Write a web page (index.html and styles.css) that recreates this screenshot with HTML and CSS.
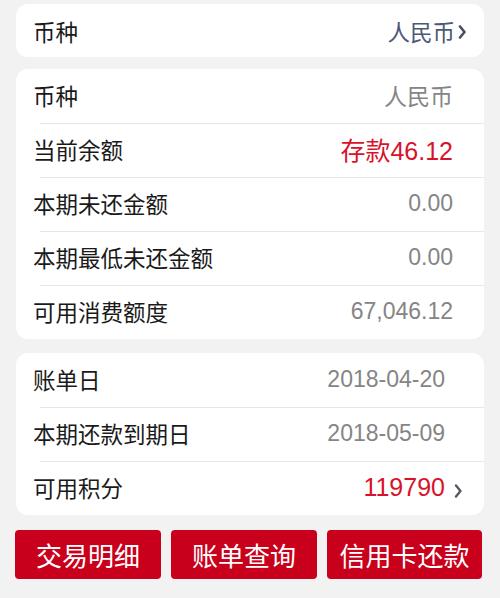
FILE: index.html
```html
<!DOCTYPE html>
<html lang="zh-CN">
<head>
<meta charset="utf-8">
<link rel="stylesheet" href="styles.css">
</head>
<body>
<div class="page">
  <div class="card">
    <div class="row row-top">
      <span class="label">币种</span>
      <span class="value blue">人民币<svg class="chev chev-top" viewBox="0 0 8 14"><path d="M1.5 1.5 L6 7 L1.5 12.5" fill="none" stroke="#4a4f5a" stroke-width="2.6" stroke-linecap="round" stroke-linejoin="round"/></svg></span>
    </div>
  </div>

  <div class="card card-list">
    <div class="row"><span class="label">币种</span><span class="value">人民币</span></div>
    <div class="row"><span class="label">当前余额</span><span class="value red">存款46.12</span></div>
    <div class="row"><span class="label">本期未还金额</span><span class="value">0.00</span></div>
    <div class="row"><span class="label">本期最低未还金额</span><span class="value">0.00</span></div>
    <div class="row"><span class="label">可用消费额度</span><span class="value">67,046.12</span></div>
  </div>

  <div class="card card-list card-dates">
    <div class="row"><span class="label">账单日</span><span class="value">2018-04-20</span></div>
    <div class="row"><span class="label">本期还款到期日</span><span class="value">2018-05-09</span></div>
    <div class="row"><span class="label">可用积分</span><span class="value red">119790<svg class="chev chev-pts" viewBox="0 0 8 14"><path d="M1.5 1.5 L6 7 L1.5 12.5" fill="none" stroke="#555a60" stroke-width="2.4" stroke-linecap="round" stroke-linejoin="round"/></svg></span></div>
  </div>

  <div class="buttons">
    <div class="btn">交易明细</div>
    <div class="btn">账单查询</div>
    <div class="btn">信用卡还款</div>
  </div>
</div>
</body>
</html>
```

FILE: styles.css
```css
html, body {
  margin: 0;
  padding: 0;
  background: #f2f2f2;
}
body {
  font-family: "Liberation Sans", "Noto Sans CJK SC", sans-serif;
  color: #1a1a1a;
}
.page {
  width: 500px;
  height: 598px;
  padding: 4px 16px 0 16px;
  box-sizing: border-box;
  overflow: hidden;
}
.card {
  background: #ffffff;
  border-radius: 12px;
  overflow: hidden;
}
.card + .card {
  margin-top: 12px;
}
.card-dates {
  margin-top: 14px !important;
}
.row {
  height: 54px;
  display: flex;
  align-items: center;
  justify-content: space-between;
  padding: 0 31px 0 17px;
  font-size: 22.5px;
  position: relative;
}
.row-top {
  height: 53px;
  padding-right: 17px;
}
.card-list .row {
  padding-bottom: 2px;
  box-sizing: border-box;
}
.card-list .row + .row::before {
  content: "";
  position: absolute;
  top: 0;
  left: 24px;
  right: 0;
  height: 1px;
  background: #e6e6e6;
}
.card-dates .row {
  padding-right: 39px;
}
.label {
  color: #1a1a1a;
}
.value {
  color: #858585;
  font-size: 23px;
  display: flex;
  align-items: center;
  position: relative;
}
.blue {
  color: #4b5877;
  font-size: 22.5px;
}
.red {
  color: #d8122a;
  font-size: 25px;
}
.chev {
  width: 9px;
  height: 14px;
}
.chev-top {
  margin-left: 3px;
  margin-top: 2px;
}
.chev-pts {
  position: absolute;
  right: -18px;
  top: 11px;
}
.buttons {
  display: flex;
  gap: 10px;
  margin-top: 15px;
  margin-left: -1px;
  margin-right: 2px;
}
.btn {
  flex: 1;
  height: 49px;
  border-radius: 4px;
  background: #c9001c;
  color: #ffffff;
  font-size: 26px;
  display: flex;
  align-items: center;
  justify-content: center;
}
.btn:last-child {
  flex: 0 0 155px;
}
```
